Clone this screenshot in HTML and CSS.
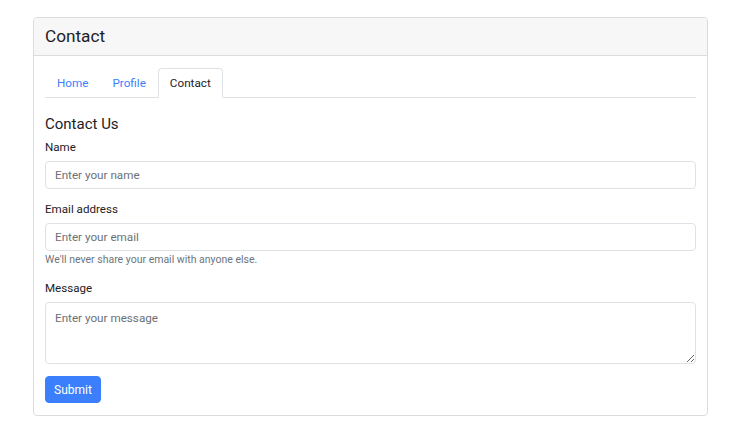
FILE: index.html
```html
<!DOCTYPE html>
<html lang="en">
<head>
<meta charset="utf-8">
<title>Contact</title>
<link rel="stylesheet" href="styles.css">
</head>
<body>
<div class="page">
  <div class="card">
    <div class="card-header"><h3 class="card-title">Contact</h3></div>
    <div class="card-body">
      <ul class="tabs">
        <li><a class="tab" href="#">Home</a></li>
        <li><a class="tab" href="#">Profile</a></li>
        <li><a class="tab active" href="#">Contact</a></li>
      </ul>
      <h4 class="section-title">Contact Us</h4>
      <form class="form">
        <div class="field">
          <label class="label" for="name">Name</label>
          <input class="control" id="name" type="text" placeholder="Enter your name">
        </div>
        <div class="field field-help">
          <label class="label" for="email">Email address</label>
          <input class="control" id="email" type="email" placeholder="Enter your email">
          <div class="help">We'll never share your email with anyone else.</div>
        </div>
        <div class="field">
          <label class="label" for="msg">Message</label>
          <textarea class="control textarea" id="msg" placeholder="Enter your message"></textarea>
        </div>
        <button class="btn" type="button">Submit</button>
      </form>
    </div>
  </div>
</div>
</body>
</html>
```
FILE: styles.css
```css
* { box-sizing: border-box; }
html, body { margin: 0; padding: 0; background: #fff; }
body {
  font-family: "Roboto", "Liberation Sans", sans-serif;
  font-size: 11.6px;
  line-height: 1.5;
  color: #212529;
}
.page { padding: 17px 32px 0 33px; }
.card {
  width: 675px;
  border: 1px solid #dcdcdc;
  border-radius: 4px;
  background: #fff;
}
.card-header {
  background: #f7f7f7;
  border-bottom: 1px solid #dcdcdc;
  padding: 6px 11px;
  border-radius: 4px 4px 0 0;
}
.card-title {
  margin: 0;
  font-size: 17.2px;
  font-weight: 400;
  line-height: 25px;
  color: #1d2125;
}
.card-body { padding: 12px 11px 12px; }
.tabs {
  list-style: none;
  margin: 0;
  padding: 0;
  display: flex;
  border-bottom: 1px solid #dee2e6;
}
.tabs li { margin-bottom: -1px; }
.tab {
  display: block;
  padding: 6px 11px;
  font-size: 11.7px;
  line-height: 16px;
  color: #3b7ffc;
  text-decoration: none;
  border: 1px solid transparent;
  border-radius: 4px 4px 0 0;
}
.tab.active {
  color: #1d2125;
  background: #fff;
  border-color: #dee2e6 #dee2e6 #fff;
}
.section-title {
  margin: 16px 0 5px;
  font-size: 15px;
  font-weight: 400;
  line-height: 20px;
  color: #1d2125;
}
.form { display: flex; flex-direction: column; align-items: flex-start; }
.field { width: 100%; margin-bottom: 12px; }
.field-help { margin-bottom: 13px; }
.label {
  display: block;
  margin-bottom: 6px;
  font-size: 11.6px;
  line-height: 16px;
  color: #1d2125;
}
.control {
  display: block;
  width: 100%;
  height: 28px;
  padding: 4px 9px;
  font-family: inherit;
  font-size: 11.7px;
  line-height: 18px;
  color: #212529;
  background: #fff;
  border: 1px solid #dee2e6;
  border-radius: 4px;
}
.control::placeholder { color: #6c7176; }
.textarea { height: 62px; resize: vertical; padding-top: 6px; }
.help {
  margin-top: 2px;
  font-size: 10.5px;
  line-height: 14px;
  color: #6c757d;
}
.btn {
  font-family: inherit;
  font-size: 12px;
  line-height: 18px;
  padding: 4px 8px;
  height: 27px;
  color: #fff;
  background: #3b7ffc;
  border: 1px solid #3b7ffc;
  border-radius: 4px;
}
```
